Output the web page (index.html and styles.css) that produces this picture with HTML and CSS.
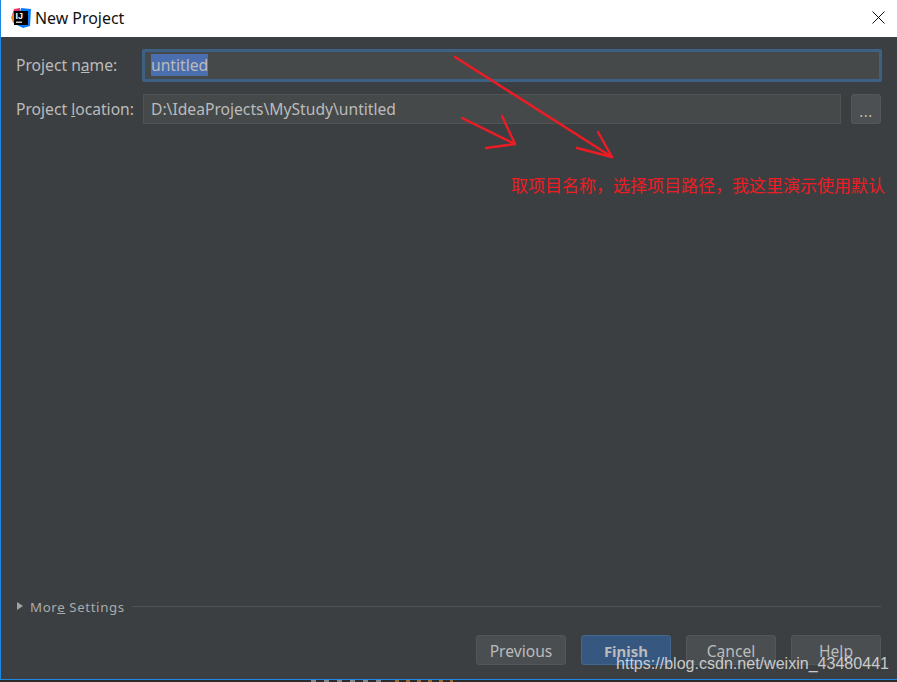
FILE: index.html
```html
<!DOCTYPE html>
<html lang="en">
<head>
<meta charset="utf-8">
<title>New Project</title>
<link rel="stylesheet" href="styles.css">
</head>
<body>
<div class="window">
  <header class="titlebar">
    <svg class="logo" viewBox="0 0 20 20" width="20" height="20" aria-hidden="true">
      <path d="M1 7 L3 1 L9 0 L9 6 L3 12 Z" fill="#f0316b"/>
      <path d="M0 9 L4 4 L5 15 L2 15 Z" fill="#f58a1f"/>
      <path d="M10 0 L20 1 L19 18 L12 20 L6 17 Z" fill="#087cfa"/>
      <rect x="3" y="3" width="14" height="14" fill="#000"/>
      <text x="4.5" y="11" class="logo-text">IJ</text>
      <rect x="5" y="13.6" width="6" height="1.2" fill="#fff"/>
    </svg>
    <span class="title">New Project</span>
    <svg class="close" viewBox="0 0 13 13" width="13" height="13" aria-hidden="true">
      <path d="M0.5 0.5 L12.5 12.5 M12.5 0.5 L0.5 12.5" stroke="#111" stroke-width="1" fill="none"/>
    </svg>
  </header>
  <main class="body">
    <form class="form">
      <label class="label label-name">Project n<u>a</u>me:</label>
      <div class="field field-focus"><span class="selected">untitled</span></div>
      <label class="label">Project <u>l</u>ocation:</label>
      <div class="location-row">
        <div class="field field-plain">D:\IdeaProjects\MyStudy\untitled</div>
        <button type="button" class="browse">...</button>
      </div>
    </form>
    <div class="spacer"></div>
    <div class="more">
      <span class="triangle"></span>
      <span class="more-text">Mor<u>e</u> Settings</span>
      <span class="more-line"></span>
    </div>
    <footer class="buttons">
      <button type="button" class="btn">Previous</button>
      <button type="button" class="btn btn-primary">Finish</button>
      <button type="button" class="btn">Cancel</button>
      <button type="button" class="btn">Help</button>
    </footer>
  </main>
</div>
<div class="strip">
  <span class="frag frag-a"></span>
  <span class="frag frag-b"></span>
</div>
<svg class="arrows" viewBox="0 0 897 682" width="897" height="682" aria-hidden="true">
  <g stroke="#ed1c24" stroke-width="2.4" fill="none" stroke-linecap="round" stroke-linejoin="round">
    <path d="M455 57 L612 157"/>
    <path d="M598 132 L612 157 L577 148"/>
    <path d="M462 118 L515 144"/>
    <path d="M502 116 L515 144 L486 148"/>
  </g>
</svg>
<div class="note">取项目名称，选择项目路径，我这里演示使用默认</div>
<div class="watermark">https://blog.csdn.net/weixin_43480441</div>
</body>
</html>
```
FILE: styles.css
```css
* { box-sizing: border-box; }
html, body { margin: 0; padding: 0; }
body {
  width: 897px;
  height: 682px;
  overflow: hidden;
  position: relative;
  background: #2b2b2b;
  font-family: "Noto Sans", "Open Sans", sans-serif;
  font-size: 15.65px;
  color: #bbbbbb;
}
.window {
  height: 680px;
  display: flex;
  flex-direction: column;
  border-left: 1px solid #1e88e5;
  border-bottom: 1px solid #1e88e5;
}
.titlebar {
  height: 37px;
  flex: none;
  background: #fff;
  display: flex;
  align-items: center;
  padding: 0 12px 2px 10px;
  gap: 4px;
}
.logo { flex: none; }
.logo-text { font: bold 9px "Liberation Sans", sans-serif; fill: #fff; }
.title { color: #111; font-size: 15.9px; flex: 1; }
.close { flex: none; }
.body {
  flex: 1;
  background: #3c3f41;
  display: flex;
  flex-direction: column;
  padding: 12px 15px 14px 15px;
}
.form {
  display: grid;
  grid-template-columns: 126px 1fr;
  row-gap: 12px;
  align-items: center;
}
.label { color: #bbbbbb; white-space: nowrap; }
.label-name { padding-bottom: 2px; }
.field {
  background: #45494a;
  color: #bbbbbb;
  display: flex;
  align-items: center;
  white-space: nowrap;
}
.field-focus {
  height: 33px;
  border: 3px solid #3d6185;
  border-radius: 2px;
  padding: 0 0 2px 6px;
}
.selected { background: #4b6eaf; line-height: 22px; }
.location-row { display: flex; gap: 10px; padding-left: 1px; padding-right: 1px; }
.field-plain {
  flex: 1;
  height: 30px;
  border: 1px solid #505354;
  padding-left: 7px;
}
.browse {
  width: 30px;
  height: 30px;
  background: #4c5052;
  border: 1px solid #54575a;
  border-radius: 3px;
  color: #c4b9a8;
  font: inherit;
  font-size: 15px;
  letter-spacing: 0.5px;
  padding: 3px 0 0;
}
.spacer { flex: 1; }
.more {
  display: flex;
  align-items: center;
  height: 18px;
  margin: 0 1px 0 1px;
}
.triangle {
  width: 0;
  height: 0;
  border-left: 6px solid #a0a3a5;
  border-top: 4.5px solid transparent;
  border-bottom: 4.5px solid transparent;
  margin-right: 7px;
}
.more-text { color: #a9abad; font-size: 13.3px; letter-spacing: 0.6px; white-space: nowrap; margin-top: 2px; }
.more-line { flex: 1; height: 1px; background: #515354; margin-left: 7px; }
.buttons {
  display: flex;
  justify-content: flex-end;
  gap: 15px;
  margin: 20px 1px 0 0;
}
.btn {
  width: 90px;
  height: 30px;
  background: #4a4e50;
  border: 1px solid #54575a;
  border-radius: 3px;
  color: #bbbbbb;
  font: inherit;
  padding: 2px 0 0;
}
.btn-primary {
  background: #365880;
  border-color: #43688f;
  font-weight: 700;
  font-size: 15px;
}
.strip {
  height: 2px;
  background: #2b2b2b;
  position: relative;
}
.frag { position: absolute; top: 0; height: 2px; }
.frag-a {
  left: 311px;
  width: 75px;
  background: repeating-linear-gradient(90deg, #7f8a90 0 5px, #2b2b2b 5px 13px);
}
.frag-b {
  left: 395px;
  width: 58px;
  background: repeating-linear-gradient(90deg, #9a6a38 0 4px, #2b2b2b 4px 11px);
}
.arrows { position: absolute; left: 0; top: 0; pointer-events: none; }
.note {
  position: absolute;
  left: 511px;
  top: 173px;
  font-family: "Noto Sans CJK SC", sans-serif;
  font-size: 17px;
  line-height: 24px;
  color: #ed1c24;
  white-space: nowrap;
}
.watermark {
  position: absolute;
  left: 616px;
  top: 653px;
  font-family: "Liberation Sans", sans-serif;
  font-size: 16.06px;
  line-height: 20px;
  color: rgba(255, 255, 255, 0.72);
  white-space: nowrap;
}
```
